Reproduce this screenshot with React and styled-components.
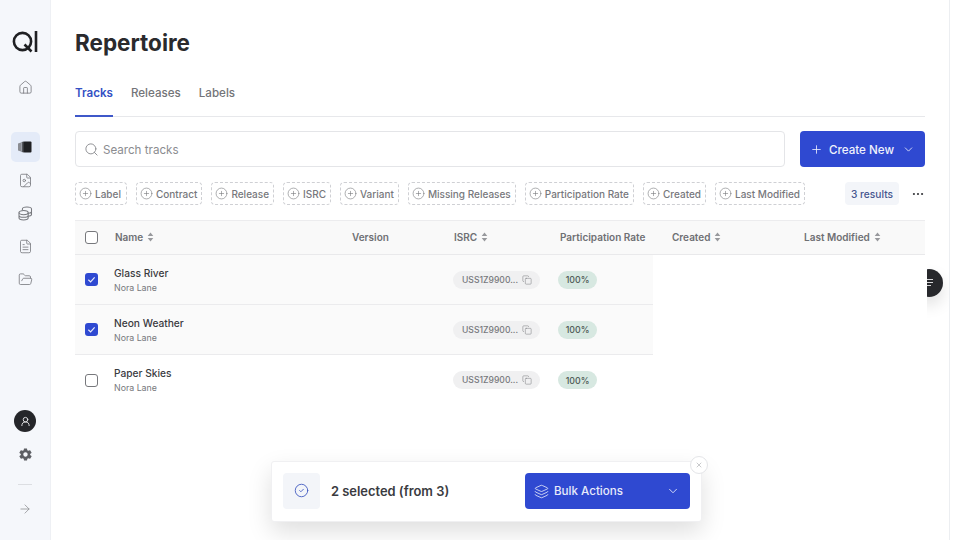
import React from 'react';
import styled, { createGlobalStyle } from 'styled-components';
import {
  ArrowRight,
  ChevronDown,
  CircleCheck,
  CirclePlus,
  Copy,
  Ellipsis,
  FileImage,
  FileText,
  FolderOpen,
  House,
  Layers,
  Plus,
  Search,
  UserRound,
  X,
} from 'lucide-react';
import { IoMdSettings } from 'react-icons/io';

const GlobalStyle = createGlobalStyle`
  html, body {
    margin: 0;
    padding: 0;
    background: #fff;
  }
  body {
    font-family: Inter, "Liberation Sans", sans-serif;
    color: #2b2b2e;
  }
  * {
    box-sizing: border-box;
  }
`;

const Page = styled.div`
  position: relative;
  display: flex;
  width: 960px;
  height: 540px;
  overflow: hidden;
  background: #fff;
`;

const Sidebar = styled.aside`
  display: flex;
  flex-direction: column;
  align-items: center;
  flex: 0 0 51px;
  padding: 30px 0 24px;
  background: #f5f7fb;
  border-right: 1px solid #eef0f4;
  color: #77797e;
`;

const Logo = styled.svg`
  display: block;
  margin-bottom: 18px;
`;

const NavItem = styled.div`
  display: flex;
  align-items: center;
  justify-content: center;
  width: 29px;
  height: ${props => props.height || 33}px;
  margin-top: ${props => props.top || 0}px;
  border-radius: 5px;
  background: ${props => (props.active ? '#e4ebf8' : 'transparent')};
`;

const SidebarBottom = styled.div`
  display: flex;
  flex-direction: column;
  align-items: center;
  margin-top: auto;
`;

const Avatar = styled.div`
  display: flex;
  align-items: center;
  justify-content: center;
  width: 22px;
  height: 22px;
  border-radius: 50%;
  background: #25262a;
  color: #e8e8ea;
`;

const SideRule = styled.div`
  width: 14px;
  height: 1px;
  margin: 13px 0 17px;
  background: #dcdee2;
`;

const Main = styled.main`
  flex: 0 0 898px;
  min-width: 0;
  padding: 29px 24px 0;
`;

const Title = styled.h1`
  margin: 0;
  font-size: 22.5px;
  line-height: 28px;
  font-weight: 700;
  color: #2a2a2d;
`;

const Tabs = styled.nav`
  display: flex;
  gap: 18px;
  margin-top: 25px;
  border-bottom: 1px solid #e7e8eb;
`;

const Tab = styled.div`
  height: 35px;
  padding-top: 3px;
  margin-bottom: -1px;
  font-size: 11.6px;
  line-height: 16px;
  font-weight: ${props => (props.active ? 600 : 500)};
  color: ${props => (props.active ? '#3450c4' : '#737478')};
  border-bottom: 2px solid ${props => (props.active ? '#3f58c9' : 'transparent')};
`;

const SearchRow = styled.div`
  display: flex;
  gap: 15px;
  margin-top: 14px;
`;

const SearchBox = styled.div`
  display: flex;
  align-items: center;
  gap: 4px;
  flex: 1;
  height: 36px;
  padding: 1px 8px 0;
  background: #fff;
  border: 1px solid #e4e5e8;
  border-radius: 4px;
  font-size: 11.6px;
  color: #8b8c90;
`;

const CreateButton = styled.div`
  display: flex;
  align-items: center;
  flex: 0 0 125px;
  height: 36px;
  padding: 1px 10px 0;
  gap: 6px;
  background: #2f49d1;
  border-radius: 4px;
  font-size: 11.6px;
  font-weight: 500;
  white-space: nowrap;
  color: #f0f2fc;
`;

const CreateCaret = styled.div`
  display: flex;
  margin-left: auto;
`;

const FilterRow = styled.div`
  display: flex;
  align-items: center;
  gap: 9px;
  margin-top: 15px;
`;

const Chip = styled.div`
  display: flex;
  align-items: center;
  gap: 3px;
  height: 23px;
  padding: 0 4px 0 3px;
  border: 1px dashed #cfd0d4;
  border-radius: 4px;
  font-size: 10px;
  font-weight: 500;
  white-space: nowrap;
  color: #77787c;

  &:first-child {
    padding-right: 5px;
  }
`;

const Results = styled.div`
  display: flex;
  align-items: center;
  justify-content: center;
  flex: 0 0 54px;
  height: 23px;
  margin-left: auto;
  margin-right: 3px;
  background: #f3f5f9;
  border-radius: 4px;
  font-size: 10.2px;
  font-weight: 500;
  color: #46568f;
`;

const More = styled.div`
  display: flex;
  align-items: center;
  justify-content: flex-end;
  flex: 0 0 13px;
  color: #3a3b3f;
`;

const Table = styled.div`
  margin-top: 15px;
`;

const HeaderRow = styled.div`
  display: grid;
  grid-template-columns: 40px 237px 102px 106px 112px 132px 121px;
  align-items: center;
  height: 35px;
  padding-bottom: 1px;
  background: #f9f9f9;
  border-top: 1px solid #ececee;
  border-bottom: 1px solid #e9e9eb;
`;

const HeaderCell = styled.div`
  display: flex;
  align-items: center;
  gap: 4px;
  font-size: 10px;
  font-weight: 600;
  white-space: nowrap;
  color: #6f7074;
`;

const CheckCell = styled.div`
  display: flex;
  justify-content: flex-start;
  padding-left: 10px;
`;

const Check = styled.div`
  display: flex;
  align-items: center;
  justify-content: center;
  width: 13px;
  height: 13px;
  border-radius: 3px;
  border: ${props => (props.checked ? 'none' : '1.3px solid #77787c')};
  background: ${props => (props.checked ? '#2f49d1' : '#fff')};
`;

const TrackRow = styled.div`
  display: grid;
  grid-template-columns: 39px 339px 105px 95px;
  align-items: center;
  width: 578px;
  height: 50px;
  background: ${props => (props.selected ? '#fafafa' : '#fff')};
  border-bottom: ${props => (props.selected ? '1px solid #ebebed' : 'none')};
`;

const TrackName = styled.div`
  font-size: 10.2px;
  line-height: 14px;
  font-weight: 500;
  color: #3a3b3f;
`;

const TrackArtist = styled.div`
  margin-top: 2px;
  font-size: 8.8px;
  line-height: 12px;
  color: #77787c;
`;

const IsrcPill = styled.div`
  display: flex;
  align-items: center;
  gap: 4px;
  width: 87px;
  height: 18px;
  padding-left: 9px;
  background: #f0f0f1;
  border-radius: 9px;
  font-size: 8.6px;
  font-weight: 500;
  white-space: nowrap;
  color: #77787c;
`;

const RatePill = styled.div`
  display: flex;
  align-items: center;
  justify-content: center;
  width: 39px;
  height: 18px;
  background: #d7e8e1;
  border-radius: 9px;
  font-size: 8.8px;
  font-weight: 500;
  color: #4c5753;
`;

const FloatClip = styled.div`
  position: absolute;
  left: 927px;
  top: 262px;
  width: 22px;
  height: 60px;
  overflow: hidden;
`;

const FloatButton = styled.div`
  position: absolute;
  left: -12px;
  top: 7px;
  width: 28px;
  height: 28px;
  border-radius: 50%;
  background: #27282c;
  box-shadow: 0 8px 16px rgba(0, 0, 0, 0.12);
`;

const FloatLines = styled.svg`
  position: absolute;
  left: 11px;
  top: 9px;
`;

const RightStrip = styled.div`
  flex: 1;
  border-left: 1px solid #eceef1;
  background: #fff;
`;

const BulkBar = styled.div`
  position: absolute;
  left: 271px;
  top: 461px;
  display: flex;
  align-items: center;
  width: 431px;
  height: 61px;
  padding: 0 11px 2px;
  background: #fff;
  border: 1px solid #f0f0f2;
  border-radius: 3px;
  box-shadow: 0 10px 24px rgba(0, 0, 0, 0.13);
`;

const BulkIcon = styled.div`
  display: flex;
  align-items: center;
  justify-content: center;
  width: 37px;
  height: 36px;
  background: #f3f5f9;
  border-radius: 4px;
  color: #3f58c0;
`;

const BulkText = styled.div`
  margin-left: 11px;
  padding-top: 1px;
  font-size: 12.9px;
  font-weight: 600;
  color: #3a3b3f;
`;

const BulkButton = styled.div`
  display: flex;
  align-items: center;
  gap: 5px;
  width: 165px;
  height: 36px;
  margin-left: auto;
  padding: 1px 10px 0 9px;
  background: #2f49d1;
  border-radius: 4px;
  font-size: 11.6px;
  font-weight: 500;
  color: #e8ebfa;
`;

const BulkCaret = styled.div`
  display: flex;
  margin-left: auto;
`;

const CloseButton = styled.div`
  position: absolute;
  right: -7px;
  top: -6px;
  display: flex;
  align-items: center;
  justify-content: center;
  width: 18px;
  height: 18px;
  background: #fff;
  border: 1px solid #e4e5e8;
  border-radius: 50%;
  color: #8b8c90;
`;

const Sort = () => (
  <svg width="7" height="10" viewBox="0 0 7 10" fill="#98999d">
    <path d="M3.5 0.5 6.3 4H0.7zM3.5 9.5 0.7 6h5.6z" />
  </svg>
);

const Tick = () => (
  <svg width="9" height="9" viewBox="0 0 10 10" fill="none" stroke="#e8ebfa" strokeWidth="1.3">
    <path d="M1.5 5.3 4 7.6 8.5 2.6" />
  </svg>
);

const StackIcon = () => (
  <svg width="15" height="15" viewBox="0 0 15 15" fill="none" stroke="currentColor" strokeWidth="1.05">
    <ellipse cx="5.6" cy="6.6" rx="4.6" ry="2.1" />
    <path d="M1 6.6v5.2c0 1.1 2.1 2.1 4.6 2.1s4.6-1 4.6-2.1V6.6M1 9.2c0 1.1 2.1 2.1 4.6 2.1s4.6-1 4.6-2.1" />
    <path d="M4.4 3.9V3c0-1.1 2-2 4.5-2s4.6.9 4.6 2v5.4c0 .8-1.2 1.6-3.3 1.9M13.5 5.6c0 .8-1.3 1.5-3.3 1.8" />
  </svg>
);

const filters = ['Label', 'Contract', 'Release', 'ISRC', 'Variant', 'Missing Releases', 'Participation Rate', 'Created', 'Last Modified'];

const tracks = [
  { name: 'Glass River', selected: true },
  { name: 'Neon Weather', selected: true },
  { name: 'Paper Skies', selected: false },
];

const columns = [
  { label: 'Name', sort: true },
  { label: 'Version' },
  { label: 'ISRC', sort: true },
  { label: 'Participation Rate' },
  { label: 'Created', sort: true },
  { label: 'Last Modified', sort: true },
];

export default function App() {
  return (
    <Page>
      <GlobalStyle />
      <Sidebar>
        <Logo width="26" height="23" viewBox="0 0 26 23" fill="none" stroke="#1f2023" strokeWidth="2.6">
          <circle cx="10.5" cy="11.5" r="8.6" />
          <path d="M12.5 14.5 19.5 21.5M24 1v21" />
        </Logo>
        <NavItem>
          <House size={15} strokeWidth={1.3} />
        </NavItem>
        <NavItem active height={30} top={28}>
          <svg width="14" height="12" viewBox="0 0 14 12">
            <path d="M0 2.5 3 1.5V10.5L0 9.5z" fill="#8a8c92" />
            <path d="M3.5 1 6 0.5V11.5L3.5 11z" fill="#55575c" />
            <rect x="5.5" y="0.5" width="8" height="11" rx="1" fill="#1f2023" />
          </svg>
        </NavItem>
        <NavItem top={2}>
          <FileImage size={15} strokeWidth={1.3} />
        </NavItem>
        <NavItem>
          <StackIcon />
        </NavItem>
        <NavItem>
          <FileText size={15} strokeWidth={1.3} />
        </NavItem>
        <NavItem>
          <FolderOpen size={15} strokeWidth={1.3} />
        </NavItem>
        <SidebarBottom>
          <Avatar>
            <UserRound size={11} strokeWidth={2} />
          </Avatar>
          <NavItem top={6}>
            <IoMdSettings size={15} color="#5c5e63" />
          </NavItem>
          <SideRule />
          <ArrowRight size={14} strokeWidth={1.3} color="#8b8c90" />
        </SidebarBottom>
      </Sidebar>

      <Main>
        <Title>Repertoire</Title>
        <Tabs>
          <Tab active>Tracks</Tab>
          <Tab>Releases</Tab>
          <Tab>Labels</Tab>
        </Tabs>

        <SearchRow>
          <SearchBox>
            <Search size={15} strokeWidth={1.5} />
            Search tracks
          </SearchBox>
          <CreateButton>
            <Plus size={13} strokeWidth={1.5} />
            Create New
            <CreateCaret>
              <ChevronDown size={13} strokeWidth={1.5} />
            </CreateCaret>
          </CreateButton>
        </SearchRow>

        <FilterRow>
          {filters.map(filter => (
            <Chip key={filter}>
              <CirclePlus size={13} strokeWidth={1.1} />
              {filter}
            </Chip>
          ))}
          <Results>3 results</Results>
          <More>
            <Ellipsis size={14} strokeWidth={1.8} />
          </More>
        </FilterRow>

        <Table>
          <HeaderRow>
            <CheckCell>
              <Check />
            </CheckCell>
            {columns.map(col => (
              <HeaderCell key={col.label}>
                {col.label}
                {col.sort && <Sort />}
              </HeaderCell>
            ))}
          </HeaderRow>
          {tracks.map(track => (
            <TrackRow key={track.name} selected={track.selected}>
              <CheckCell>
                <Check checked={track.selected}>{track.selected && <Tick />}</Check>
              </CheckCell>
              <div>
                <TrackName>{track.name}</TrackName>
                <TrackArtist>Nora Lane</TrackArtist>
              </div>
              <IsrcPill>
                USS1Z9900...
                <Copy size={10} strokeWidth={1.2} />
              </IsrcPill>
              <RatePill>100%</RatePill>
            </TrackRow>
          ))}
        </Table>
      </Main>

      <RightStrip />

      <FloatClip>
        <FloatButton>
          <FloatLines width="8" height="10" viewBox="0 0 8 10" stroke="#d8d8da" strokeWidth="1.1">
            <path d="M0 1.5h7M0 4.5h7M0 7.5h5" />
          </FloatLines>
        </FloatButton>
      </FloatClip>

      <BulkBar>
        <BulkIcon>
          <CircleCheck size={15} strokeWidth={1.4} />
        </BulkIcon>
        <BulkText>2 selected (from 3)</BulkText>
        <BulkButton>
          <Layers size={15} strokeWidth={1.3} />
          Bulk Actions
          <BulkCaret>
            <ChevronDown size={14} strokeWidth={1.5} />
          </BulkCaret>
        </BulkButton>
        <CloseButton>
          <X size={8} strokeWidth={1.4} />
        </CloseButton>
      </BulkBar>
    </Page>
  );
}
